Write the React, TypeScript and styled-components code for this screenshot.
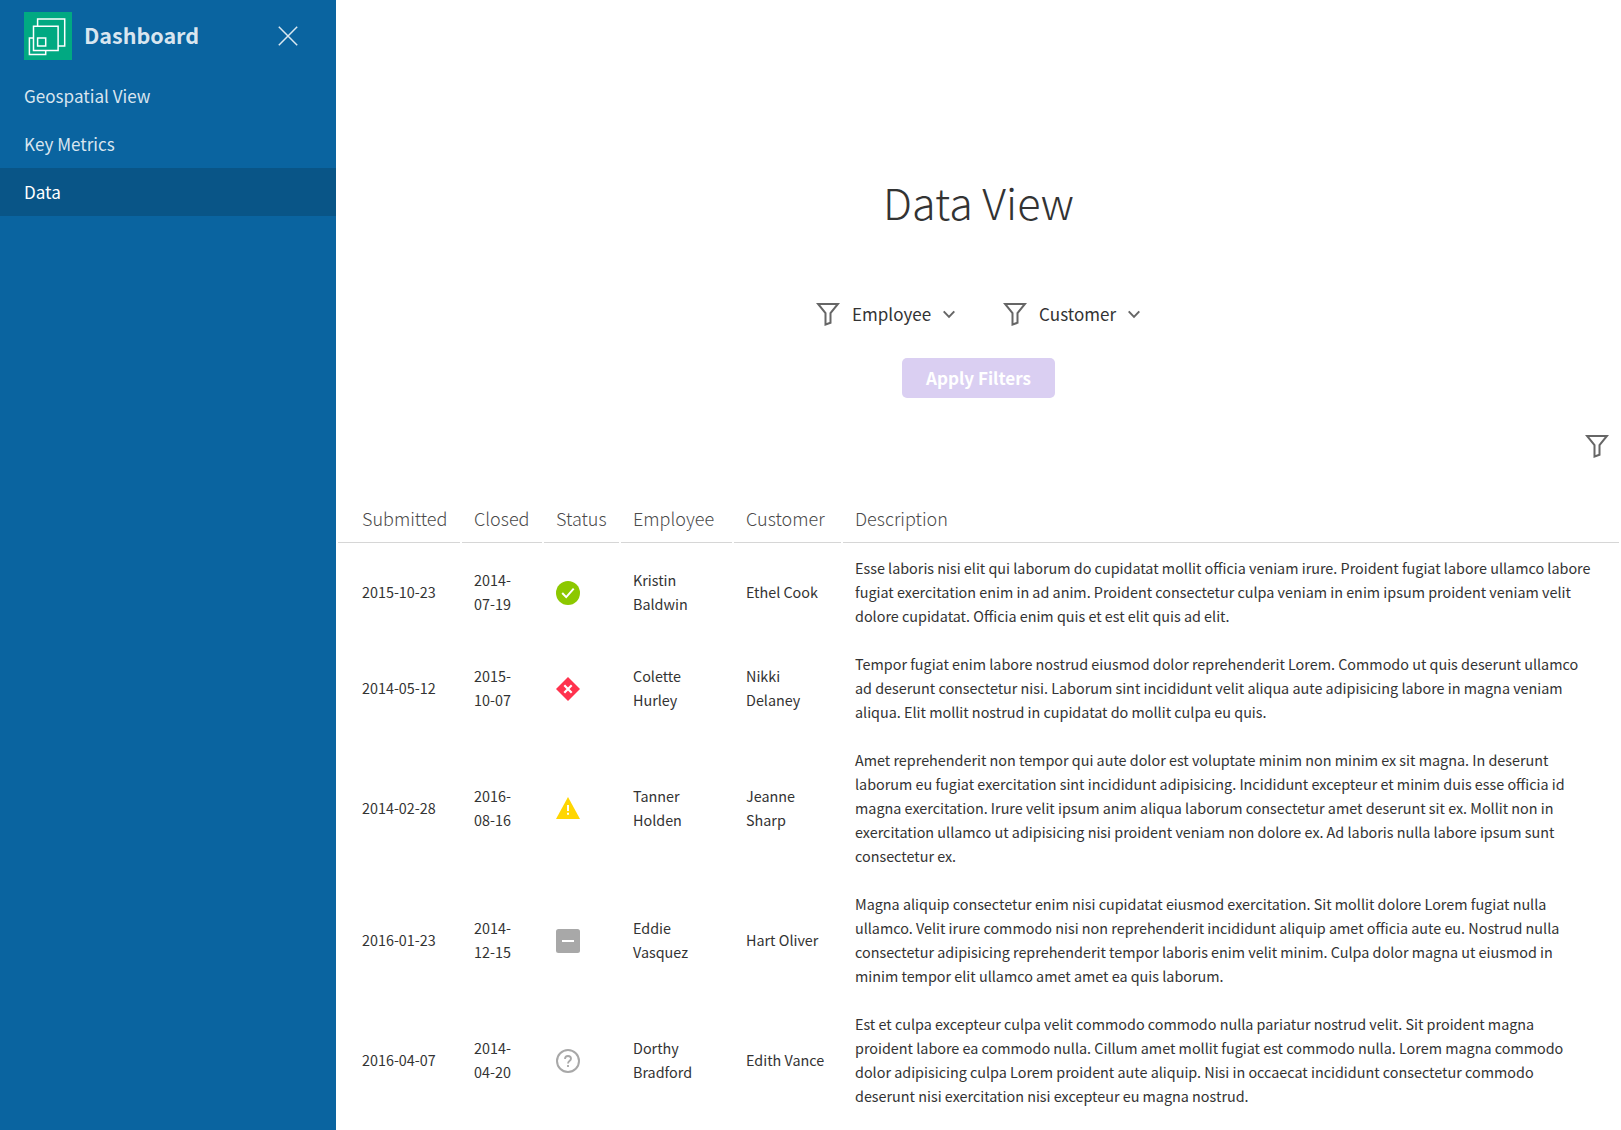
import React from "react";
import styled, { createGlobalStyle, css } from "styled-components";

const GlobalStyle = createGlobalStyle`
  * { box-sizing: border-box; }
  body {
    margin: 0;
    background: #fff;
    color: #333;
    font-family: "Noto Sans CJK SC", "Noto Sans", sans-serif;
    font-size: 14.375px;
    line-height: 24px;
    overflow: hidden;
  }
`;

const Shell = styled.div`
  display: flex;
  height: 1130px;
  overflow: hidden;
`;

const Sidebar = styled.aside`
  flex: 0 0 336px;
  background: #0a64a0;
  color: rgba(255, 255, 255, 0.85);
`;

const SidebarHeader = styled.header`
  display: flex;
  align-items: center;
  height: 72px;
  padding: 0 36px 0 24px;
`;

const Brand = styled.span`
  flex: 1;
  margin-left: 12px;
  padding-bottom: 2px;
  font-size: 21.49px;
  font-weight: 700;
`;

const IconButton = styled.button`
  display: flex;
  padding: 0;
  border: 0;
  background: none;
  color: inherit;
`;

const NavItem = styled.a<{ $active?: boolean }>`
  display: flex;
  align-items: center;
  height: 48px;
  padding: 0 24px;
  font-size: 17.09px;
  ${(p) =>
    p.$active &&
    css`
      background: #095587;
      color: #fff;
    `}
`;

const Main = styled.main`
  flex: 1;
  display: flex;
  flex-direction: column;
  min-width: 0;
`;

const Title = styled.h1`
  margin: 165px 0 0;
  height: 72px;
  line-height: 72px;
  text-align: center;
  font-size: 43.15px;
  font-weight: 300;
`;

const Filters = styled.div`
  display: flex;
  justify-content: center;
  gap: 48px;
  margin-top: 54px;
  height: 48px;
  padding-right: 1px;
`;

const FilterMenu = styled.button`
  display: flex;
  align-items: center;
  padding: 0;
  border: 0;
  background: none;
  color: #333;
  font: inherit;
  font-size: 17.05px;
`;

const FilterLabel = styled.span`
  margin: 0 12px;
  padding-bottom: 2px;
`;

const ApplyButton = styled.button`
  align-self: center;
  width: 153px;
  height: 40px;
  margin-top: 19px;
  padding: 0;
  border: 0;
  border-radius: 5px;
  background: #dacff2;
  color: #fff;
  font: inherit;
  font-size: 17.09px;
  font-weight: 700;
`;

const TableTools = styled.div`
  display: flex;
  justify-content: flex-end;
  margin-top: 37px;
  padding-right: 12px;
`;

const Table = styled.table`
  width: 1285px;
  margin-top: 35px;
  table-layout: fixed;
  border-collapse: separate;
  border-spacing: 2px;
`;

const HeadCell = styled.th`
  height: 47px;
  padding: 0 0 2px 12px;
  border-bottom: 1px solid #d6d6d6;
  color: #4a4a4a;
  text-align: left;
  font-size: 18px;
  font-weight: 300;
  &:first-child { padding-left: 24px; }
`;

const Cell = styled.td`
  padding: 11px 12px;
  vertical-align: middle;
  &:first-child { padding-left: 24px; }
  &:last-child { padding-right: 26px; }
  svg { display: block; margin-top: 2px; }
`;

const Logo = () => (
  <svg width="48" height="48" viewBox="0 0 48 48" fill="none" stroke="#fff" strokeWidth="1.5">
    <rect width="48" height="48" fill="#01a982" stroke="none" />
    <path d="M13.6 14.3V7H40.7V34.1H34.1M9.5 14.3H34.1V38.4H9.5ZM9.5 26H5.4V42.6H21.7V38.4M13.6 26H21.7V34.1H13.6Z" />
  </svg>
);

const CloseIcon = () => (
  <svg width="24" height="24" viewBox="0 0 24 24" fill="none" stroke="currentColor" strokeWidth="1.5">
    <path d="M2.8 2.8 21.2 21.2M21.2 2.8 2.8 21.2" />
  </svg>
);

const FilterIcon = () => (
  <svg width="24" height="24" viewBox="0 0 24 24" fill="none" stroke="#666" strokeWidth="2">
    <path d="M2.1 1H21.9L14.5 10V19.8L9.5 21.5V10Z" />
  </svg>
);

const CaretIcon = () => (
  <svg width="12" height="12" viewBox="0 0 12 12" fill="none" stroke="#666" strokeWidth="2">
    <path d="M.7 2.4 6 7.9 11.3 2.4" />
  </svg>
);

type Status = "ok" | "critical" | "warning" | "disabled" | "unknown";

const StatusIcon = ({ status }: { status: Status }) => (
  <svg width="24" height="24" viewBox="0 0 24 24" fill="none">
    {status === "ok" && (
      <>
        <circle cx="12" cy="12" r="12" fill="#8cc800" />
        <path d="m6.2 12 4 4.1L17.7 7.7" stroke="#fff" strokeWidth="2" />
      </>
    )}
    {status === "critical" && (
      <>
        <path d="m12 0 12 12-12 12L0 12Z" fill="#ff324d" />
        <path d="m8.3 8.3 7.4 7.4m0-7.4-7.4 7.4" stroke="#fff" strokeWidth="2.2" />
      </>
    )}
    {status === "warning" && (
      <>
        <path d="m12 0 12 22H0Z" fill="#ffd602" />
        <path d="M12 8v6m0 1.7v2" stroke="#fff" strokeWidth="2" />
      </>
    )}
    {status === "disabled" && (
      <>
        <rect width="24" height="24" rx="2.5" fill="#a8a8a8" />
        <path d="M6 12h12" stroke="#fff" strokeWidth="2" />
      </>
    )}
    {status === "unknown" && (
      <>
        <circle cx="12" cy="12" r="11" stroke="#a8a8a8" strokeWidth="2" />
        <path
          d="M9 10c0-2 1.2-3 3-3s3 1.1 3 2.7c0 2.1-3 2.1-3 4.9M12 16v2"
          stroke="#a8a8a8"
          strokeWidth="1.8"
        />
      </>
    )}
  </svg>
);

const columns = [
  { label: "Submitted", width: 122 },
  { label: "Closed", width: 80 },
  { label: "Status", width: 75 },
  { label: "Employee", width: 111 },
  { label: "Customer", width: 107 },
  { label: "Description", width: 776 },
];

interface Row {
  submitted: string;
  closed: string;
  status: Status;
  employee: string;
  customer: string;
  description: string;
}

const rows: Row[] = [
  {
    submitted: "2015-10-23",
    closed: "2014-07-19",
    status: "ok",
    employee: "Kristin Baldwin",
    customer: "Ethel Cook",
    description:
      "Esse laboris nisi elit qui laborum do cupidatat mollit officia veniam irure. Proident fugiat labore ullamco labore fugiat exercitation enim in ad anim. Proident consectetur culpa veniam in enim ipsum proident veniam velit dolore cupidatat. Officia enim quis et est elit quis ad elit.",
  },
  {
    submitted: "2014-05-12",
    closed: "2015-10-07",
    status: "critical",
    employee: "Colette Hurley",
    customer: "Nikki Delaney",
    description:
      "Tempor fugiat enim labore nostrud eiusmod dolor reprehenderit Lorem. Commodo ut quis deserunt ullamco ad deserunt consectetur nisi. Laborum sint incididunt velit aliqua aute adipisicing labore in magna veniam aliqua. Elit mollit nostrud in cupidatat do mollit culpa eu quis.",
  },
  {
    submitted: "2014-02-28",
    closed: "2016-08-16",
    status: "warning",
    employee: "Tanner Holden",
    customer: "Jeanne Sharp",
    description:
      "Amet reprehenderit non tempor qui aute dolor est voluptate minim non minim ex sit magna. In deserunt laborum eu fugiat exercitation sint incididunt adipisicing. Incididunt excepteur et minim duis esse officia id magna exercitation. Irure velit ipsum anim aliqua laborum consectetur amet deserunt sit ex. Mollit non in exercitation ullamco ut adipisicing nisi proident veniam non dolore ex. Ad laboris nulla labore ipsum sunt consectetur ex.",
  },
  {
    submitted: "2016-01-23",
    closed: "2014-12-15",
    status: "disabled",
    employee: "Eddie Vasquez",
    customer: "Hart Oliver",
    description:
      "Magna aliquip consectetur enim nisi cupidatat eiusmod exercitation. Sit mollit dolore Lorem fugiat nulla ullamco. Velit irure commodo nisi non reprehenderit incididunt aliquip amet officia aute eu. Nostrud nulla consectetur adipisicing reprehenderit tempor laboris enim velit minim. Culpa dolor magna ut eiusmod in minim tempor elit ullamco amet amet ea quis laborum.",
  },
  {
    submitted: "2016-04-07",
    closed: "2014-04-20",
    status: "unknown",
    employee: "Dorthy Bradford",
    customer: "Edith Vance",
    description:
      "Est et culpa excepteur culpa velit commodo commodo nulla pariatur nostrud velit. Sit proident magna proident labore ea commodo nulla. Cillum amet mollit fugiat est commodo nulla. Lorem magna commodo dolor adipisicing culpa Lorem proident aute aliquip. Nisi in occaecat incididunt consectetur commodo deserunt nisi exercitation nisi excepteur eu magna nostrud.",
  },
];

export default function App() {
  return (
    <>
      <GlobalStyle />
      <Shell>
        <Sidebar>
          <SidebarHeader>
            <Logo />
            <Brand>Dashboard</Brand>
            <IconButton aria-label="Close">
              <CloseIcon />
            </IconButton>
          </SidebarHeader>
          <nav>
            <NavItem>Geospatial View</NavItem>
            <NavItem>Key Metrics</NavItem>
            <NavItem $active>Data</NavItem>
          </nav>
        </Sidebar>
        <Main>
          <Title>Data View</Title>
          <Filters>
            {["Employee", "Customer"].map((label) => (
              <FilterMenu key={label}>
                <FilterIcon />
                <FilterLabel>{label}</FilterLabel>
                <CaretIcon />
              </FilterMenu>
            ))}
          </Filters>
          <ApplyButton>Apply Filters</ApplyButton>
          <TableTools>
            <FilterIcon />
          </TableTools>
          <Table>
            <colgroup>
              {columns.map((c) => (
                <col key={c.label} width={c.width} />
              ))}
            </colgroup>
            <thead>
              <tr>
                {columns.map((c) => (
                  <HeadCell key={c.label}>{c.label}</HeadCell>
                ))}
              </tr>
            </thead>
            <tbody>
              {rows.map((r) => (
                <tr key={r.submitted}>
                  <Cell>{r.submitted}</Cell>
                  <Cell>{r.closed}</Cell>
                  <Cell>
                    <StatusIcon status={r.status} />
                  </Cell>
                  <Cell>{r.employee}</Cell>
                  <Cell>{r.customer}</Cell>
                  <Cell>{r.description}</Cell>
                </tr>
              ))}
            </tbody>
          </Table>
        </Main>
      </Shell>
    </>
  );
}
